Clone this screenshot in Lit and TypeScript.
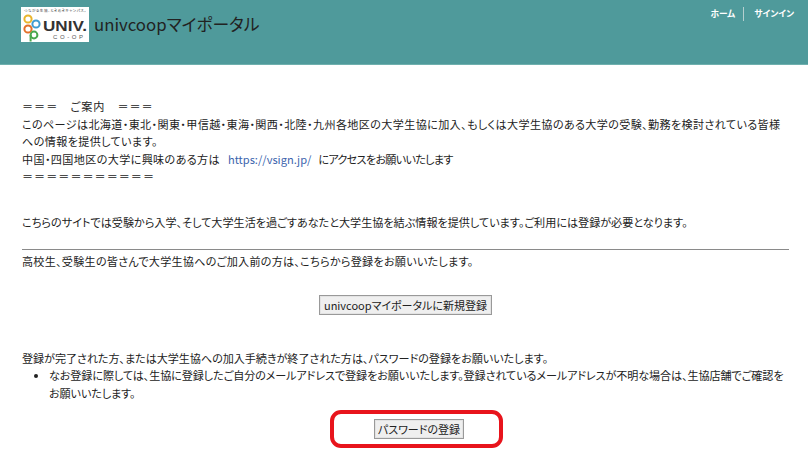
import { LitElement, html, css } from "lit";
import { customElement } from "lit/decorators.js";

@customElement("app-root")
export class AppRoot extends LitElement {
  static styles = css`
    :host { display: block; width: 808px; height: 454px; overflow: hidden; background: #fff; color: #222;
      font-family: "Noto Sans CJK JP", "Noto Sans", sans-serif; font-size: 11.1px; line-height: 17.5px; font-feature-settings: "palt"; }
    header { background: #4f9a9b; border-bottom: 1px solid #6fb0ae; display: flex; justify-content: space-between; padding: 7px 14px 0 21px; height: 57px; }
    .brand { display: flex; align-items: flex-start; gap: 5px; }
    .logo { width: 68px; height: 35px; display: block; }
    .title { font-size: 16.8px; line-height: 35px; color: #222; }
    nav { display: flex; align-items: flex-start; color: #fff; font-size: 8.7px; font-weight: 700; line-height: 14px; }
    nav span:first-child { padding-right: 8px; border-right: 1px solid #b5cfcf; }
    nav span:last-child { padding-left: 10px; }
    main { padding: 33px 19px 0 22px; }
    p { margin: 0; }
    a { color: #3b64ad; text-decoration: none; margin: 0 7px 0 8px; }
    .intro { margin-bottom: 28px; }
    .eq { letter-spacing: 1px; }
    .wide { letter-spacing: .36px; }
    .mid { letter-spacing: .25px; }
    .tight { letter-spacing: -.7px; }
    .slim { letter-spacing: -.05px; }
    hr { border: none; border-top: 1px solid #8a8a8a; margin: 18px 0 3px; }
    .center { display: flex; justify-content: center; }
    .first { margin: 24px 0 35px; }
    button { font: inherit; font-size: 11px; line-height: 16px; color: #222; background: #efefef; border: 1px solid #999; border-radius: 0; padding: 1px 4px; box-shadow: inset 0 0 0 1px #e3e3e3; }
    ul { margin: 0; padding-left: 27px; letter-spacing: -.1px; }
    .second { margin-top: 17px; padding-left: 27px; }
    .second button { padding: 1px 3px; }
    .mark { position: absolute; left: 330px; top: 410px; width: 173px; height: 38px; box-sizing: border-box; border: 4px solid #e8141c; border-radius: 11px; }
  `;

  render() {
    return html`
      <header>
        <div class="brand">
          <svg class="logo" viewBox="0 0 68 35" aria-hidden="true">
            <rect width="68" height="35" fill="#fff"/>
            <text x="3" y="5" font-size="3.6" fill="#444" font-family="Noto Sans CJK JP" textLength="62">つながる生協、ときめきキャンパス。</text>
            <circle cx="7" cy="12" r="3.6" fill="none" stroke="#e9b52c" stroke-width="2"/>
            <circle cx="15" cy="17" r="3.6" fill="none" stroke="#3f9bd0" stroke-width="2"/>
            <circle cx="7" cy="22" r="3.6" fill="none" stroke="#e2702a" stroke-width="2"/>
            <circle cx="13" cy="28" r="3.4" fill="none" stroke="#4aa84e" stroke-width="2"/>
            <path d="M9.6 28v6.5" stroke="#4aa84e" stroke-width="2"/>
            <text x="22" y="24" font-size="15" font-weight="700" fill="#333" font-family="Liberation Sans" textLength="44" lengthAdjust="spacingAndGlyphs">UNIV.</text>
            <text x="32" y="31.5" font-size="6" fill="#555" font-family="Liberation Sans" textLength="30">CO-OP</text>
          </svg>
          <div class="title">univcoopマイポータル</div>
        </div>
        <nav><span>ホーム</span><span>サインイン</span></nav>
      </header>
      <main>
        <div class="intro">
          <p class="eq">＝＝＝　ご案内　＝＝＝</p>
          <p class="wide">このページは北海道・東北・関東・甲信越・東海・関西・北陸・九州各地区の大学生協に加入、もしくは大学生協のある大学の受験、勤務を検討されている皆様への情報を提供しています。</p>
          <p><span class="wide">中国・四国地区の大学に興味のある方は</span><a href="#">https://vsign.jp/</a><span class="tight">にアクセスをお願いいたします</span></p>
          <p class="eq">＝＝＝＝＝＝＝＝＝＝＝</p>
        </div>
        <p>こちらのサイトでは受験から入学、そして大学生活を過ごすあなたと大学生協を結ぶ情報を提供しています。ご利用には登録が必要となります。</p>
        <hr />
        <p class="mid">高校生、受験生の皆さんで大学生協へのご加入前の方は、こちらから登録をお願いいたします。</p>
        <div class="center first"><button>univcoopマイポータルに新規登録</button></div>
        <p class="slim">登録が完了された方、または大学生協への加入手続きが終了された方は、パスワードの登録をお願いいたします。</p>
        <ul><li>なお登録に際しては、生協に登録したご自分のメールアドレスで登録をお願いいたします。登録されているメールアドレスが不明な場合は、生協店舗でご確認をお願いいたします。</li></ul>
        <div class="center second"><button>パスワードの登録</button></div>
      </main>
      <div class="mark"></div>
    `;
  }
}
